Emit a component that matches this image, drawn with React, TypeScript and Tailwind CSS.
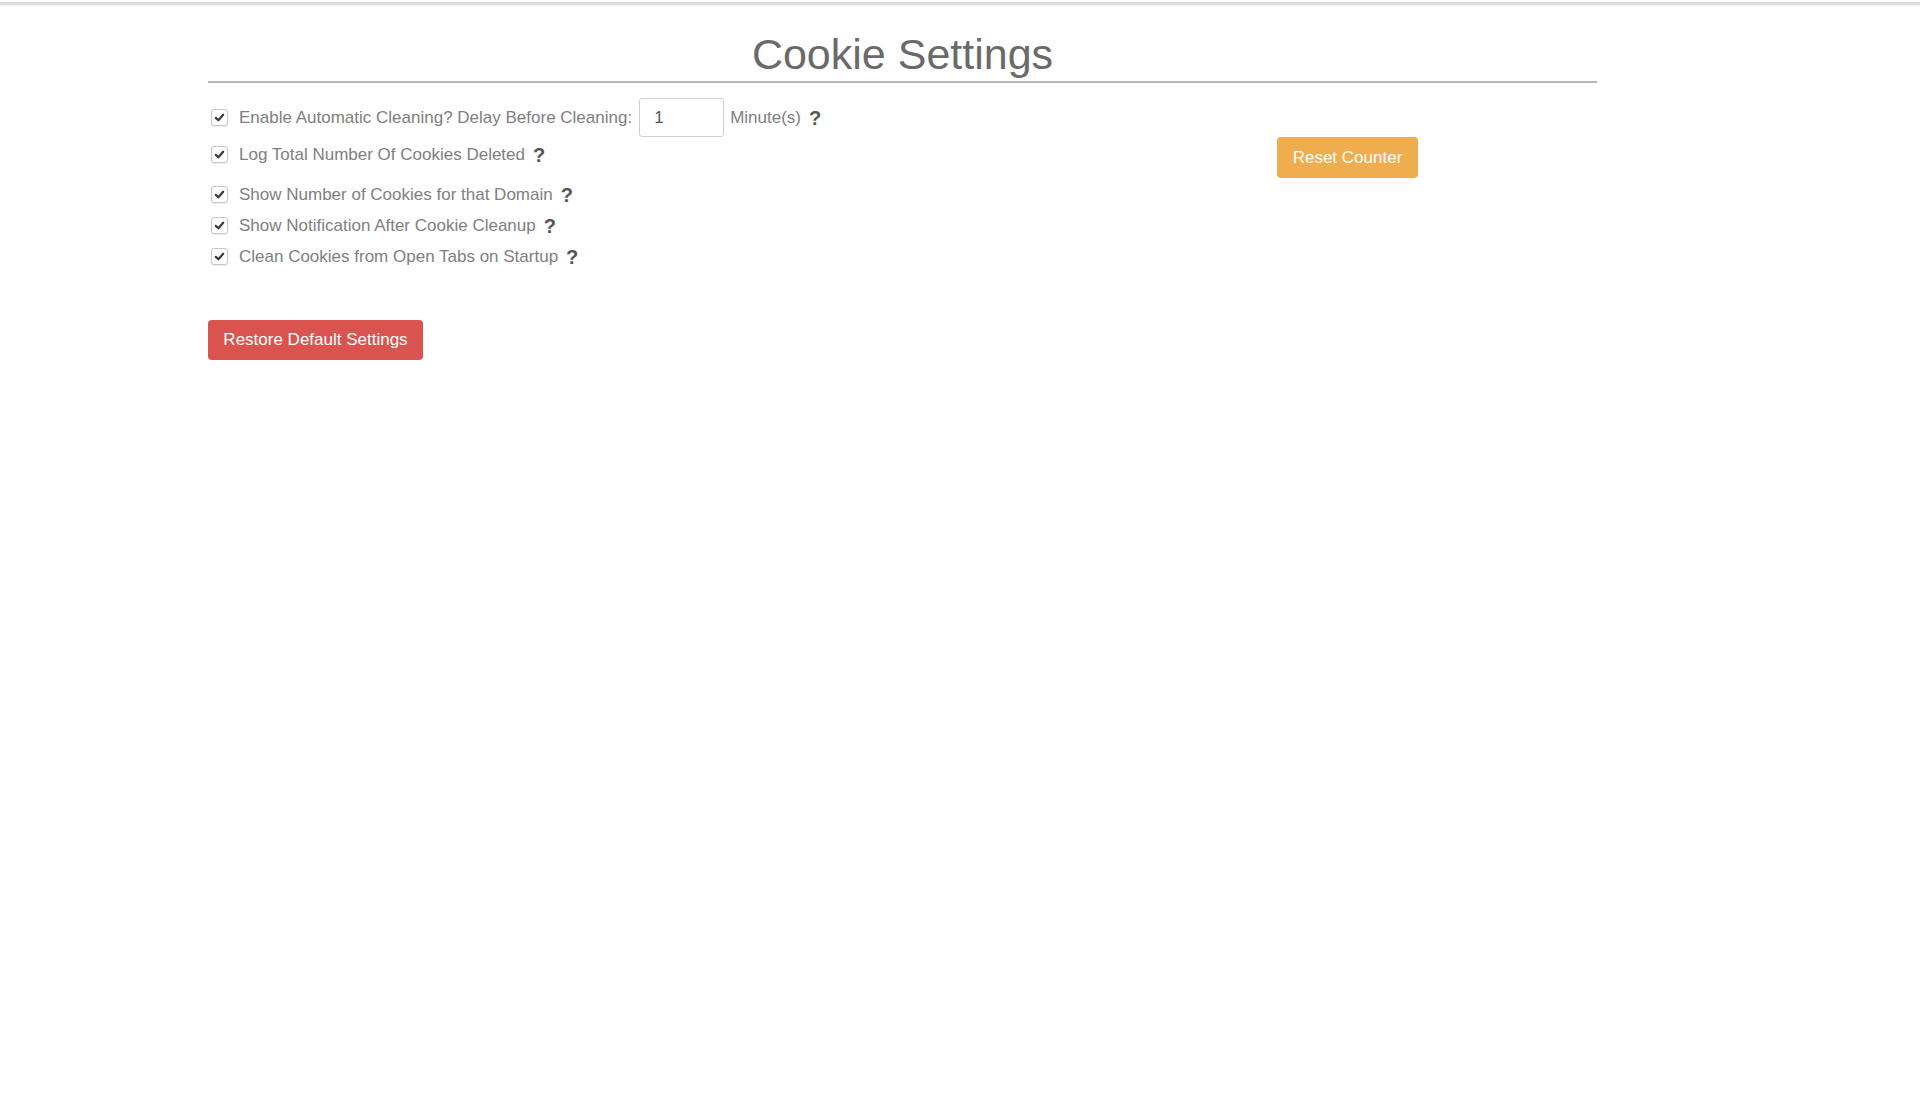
import React from "react";

function Check() {
  return (
    <span className="w-[17px] h-[17px] shrink-0 rounded-[3px] border border-[#c8c8c8] bg-white flex items-center justify-center shadow-[0_1px_1px_rgba(0,0,0,0.08)]">
      <svg width="11" height="11" viewBox="0 0 12 12">
        <path d="M2 6.4 L4.8 9 L10 3" fill="none" stroke="#3a3a3a" strokeWidth="2.4" strokeLinecap="round" strokeLinejoin="round" />
      </svg>
    </span>
  );
}

function Help() {
  return <span className="ml-[8px] text-[20px] font-bold leading-none text-[#555]">?</span>;
}

function Row({ label, className = "" }: { label: string; className?: string }) {
  return (
    <div className={`flex items-center ${className}`}>
      <span className="ml-[3px]">
        <Check />
      </span>
      <span className="ml-[11px]">{label}</span>
      <Help />
    </div>
  );
}

export default function App() {
  return (
    <div className="min-h-[1114px] bg-white text-[17px] text-[#808080]" style={{ fontFamily: '"Liberation Sans", Arial, sans-serif' }}>
      {/* top bar edge */}
      <div className="pt-[2px]">
        <div className="h-[3px] bg-[#dcdcdc] shadow-[0_1px_2px_rgba(0,0,0,0.06)]" />
      </div>

      <div className="ml-[208px] w-[1389px]">
        <h1 className="mt-[25px] text-center text-[43px] leading-[48px] text-[#6a6a6a]">Cookie Settings</h1>
        <div className="mt-[3px] h-[2px] bg-[#b8b8b8]" />

        <div className="mt-[15px]">
          {/* Row 1 */}
          <div className="flex items-center h-[39px]">
            <span className="ml-[3px]">
              <Check />
            </span>
            <span className="ml-[11px]">Enable Automatic Cleaning? Delay Before Cleaning:</span>
            <input
              defaultValue="1"
              className="ml-[7px] w-[85px] h-[39px] rounded-[3px] border border-[#d0d0d0] pl-[14px] text-[17px] text-[#555] outline-none"
            />
            <span className="ml-[6px]">Minute(s)</span>
            <Help />
          </div>

          {/* Row 2 */}
          <div className="flex items-start h-[41px]">
            <div className="w-[1069px] h-[35px] flex items-center">
              <span className="ml-[3px]">
                <Check />
              </span>
              <span className="ml-[11px]">Log Total Number Of Cookies Deleted</span>
              <Help />
            </div>
            <button className="w-[141px] h-[41px] rounded-[4px] bg-[#f0ad4e] text-white text-[17px]">Reset Counter</button>
          </div>

          <Row label="Show Number of Cookies for that Domain" className="h-[31px] mt-[1px]" />
          <Row label="Show Notification After Cookie Cleanup" className="h-[31px]" />
          <Row label="Clean Cookies from Open Tabs on Startup" className="h-[31px]" />
        </div>

        <button className="mt-[48px] w-[215px] h-[40px] rounded-[4px] bg-[#d9534f] text-white text-[17px]">
          Restore Default Settings
        </button>
      </div>
    </div>
  );
}
